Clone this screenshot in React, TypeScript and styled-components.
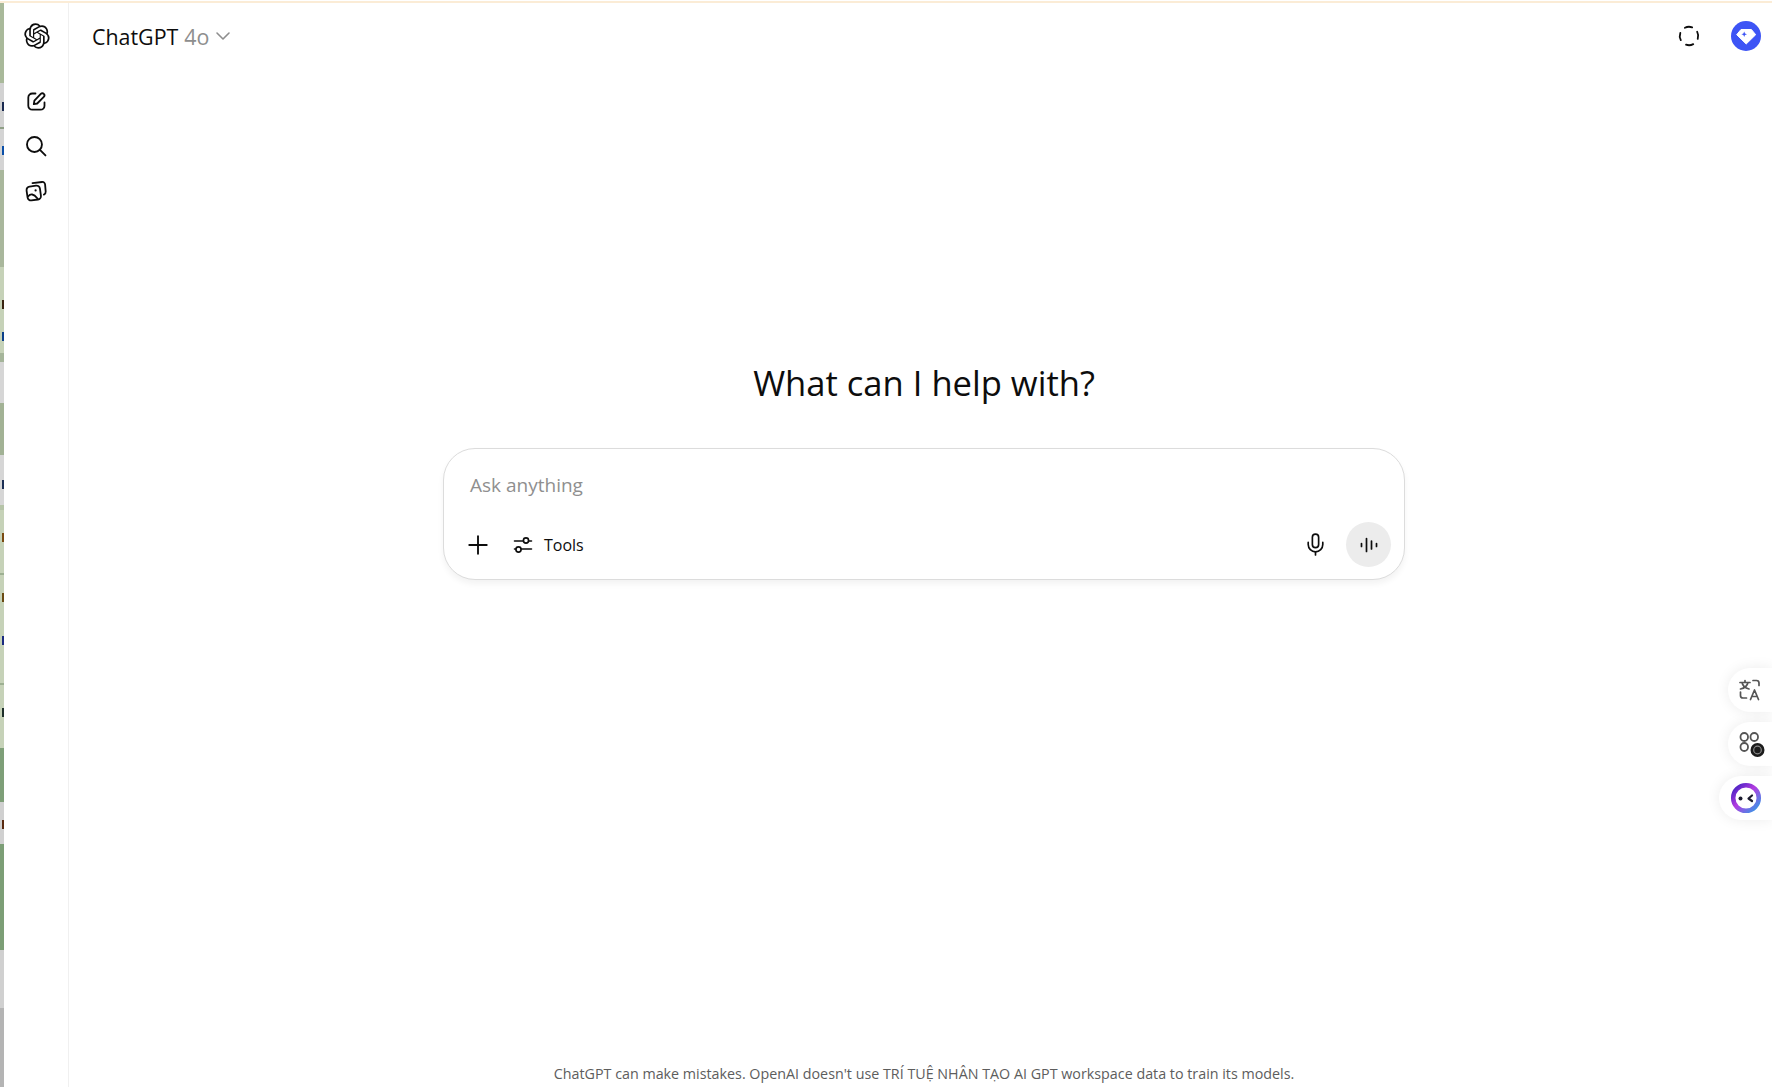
import React from 'react';
import styled, { createGlobalStyle } from 'styled-components';
import { ChevronDown, Mic, Plus } from 'lucide-react';

const GlobalStyle = createGlobalStyle`
  html, body {
    margin: 0;
    height: 100%;
    background: #fff;
    overflow: hidden;
  }
  #root {
    height: 100%;
  }
`;

const Page = styled.div`
  display: flex;
  flex-direction: column;
  width: 1772px;
  height: 1087px;
  font-family: 'Open Sans', 'Noto Sans', sans-serif;
  color: #0d0d0d;
  overflow: hidden;
`;

const TopEdge = styled.div`
  flex: 0 0 3px;
  background: linear-gradient(#fff 0, #fff 1px, #fbecd6 1px, #fbecd6 3px);
`;

const Body = styled.div`
  flex: 1;
  display: flex;
  min-height: 0;
`;

const Wallpaper = styled.div`
  flex: 0 0 4px;
  display: flex;
  flex-direction: column;
  position: relative;
  overflow: hidden;
`;

const Stripe = styled.div<{ $h: number; $c: string }>`
  flex: 0 0 ${({ $h }) => $h}px;
  background: ${({ $c }) => $c};
`;

const StripeMark = styled.span<{ $y: number; $c: string }>`
  position: absolute;
  right: 0;
  top: ${({ $y }) => $y - 3}px;
  width: 2px;
  height: 9px;
  background: ${({ $c }) => $c};
`;

const Rail = styled.aside`
  flex: 0 0 64px;
  display: flex;
  flex-direction: column;
  align-items: center;
  border-right: 1px solid #f0f0f0;
`;

const RailLogo = styled.div`
  display: flex;
  margin: 20px 0 34px 2px;
`;

const RailIcon = styled.button`
  display: flex;
  align-items: center;
  justify-content: center;
  width: 36px;
  height: 36px;
  margin-bottom: 9px;
  padding: 0;
  border: 0;
  background: none;
  color: #0d0d0d;
`;

const Main = styled.main`
  flex: 1;
  display: flex;
  flex-direction: column;
  position: relative;
  min-width: 0;
`;

const Header = styled.header`
  flex: 0 0 66px;
  display: flex;
  align-items: center;
  padding: 0 11px 0 23px;
`;

const ModelName = styled.div`
  display: flex;
  align-items: center;
  font-size: 21.4px;
  color: #0d0d0d;
`;

const ModelVersion = styled.span`
  margin-left: 6px;
  color: #8e8e8e;
`;

const ModelChevron = styled(ChevronDown)`
  margin-left: 2px;
  color: #8e8e8e;
`;

const HeaderActions = styled.div`
  margin-left: auto;
  display: flex;
  align-items: center;
  gap: 31px;
`;

const Center = styled.div`
  flex: 1;
  display: flex;
  flex-direction: column;
  align-items: center;
  padding: 291px 0 0 7px;
`;

const Heading = styled.h1`
  margin: 0 0 42px;
  font-size: 34.6px;
  line-height: 46px;
  font-weight: 400;
  color: #0d0d0d;
`;

const Composer = styled.div`
  box-sizing: border-box;
  width: 962px;
  height: 132px;
  padding: 22px 13px 12px 12px;
  display: flex;
  flex-direction: column;
  justify-content: space-between;
  border: 1px solid #dcdcdc;
  border-radius: 32px;
  background: #fff;
  box-shadow: 0 4px 6px rgba(0, 0, 0, 0.05);
`;

const Placeholder = styled.div`
  padding-left: 14px;
  font-size: 19px;
  line-height: 28px;
  color: #8f8f8f;
`;

const ComposerRow = styled.div`
  display: flex;
  align-items: center;
  padding-left: 4px;
`;

const PlainButton = styled.button`
  display: flex;
  align-items: center;
  justify-content: center;
  width: 36px;
  height: 36px;
  padding: 0;
  border: 0;
  background: none;
  color: #0d0d0d;
`;

const ToolsButton = styled.button`
  display: flex;
  align-items: center;
  gap: 11px;
  margin-left: 17px;
  padding: 0;
  border: 0;
  background: none;
  font: inherit;
  font-size: 16px;
  color: #0d0d0d;
`;

const RowEnd = styled.div`
  margin-left: auto;
  display: flex;
  align-items: center;
  gap: 13px;
`;

const VoiceButton = styled.button`
  display: flex;
  align-items: center;
  justify-content: center;
  width: 45px;
  height: 45px;
  padding: 0;
  border: 0;
  border-radius: 50%;
  background: #ececec;
  color: #0d0d0d;
`;

const Footer = styled.footer`
  flex: 0 0 auto;
  padding: 0 0 3px 7px;
  text-align: center;
  font-size: 14.3px;
  line-height: 20px;
  color: #5d5d5d;
`;

const FloatDock = styled.div`
  position: absolute;
  right: 0;
  top: 665px;
  display: flex;
  flex-direction: column;
  align-items: flex-end;
  gap: 10px;
`;

const FloatButton = styled.div<{ $wide?: boolean }>`
  display: flex;
  align-items: center;
  box-sizing: border-box;
  width: ${({ $wide }) => ($wide ? 53 : 44)}px;
  height: 44px;
  padding-left: ${({ $wide }) => ($wide ? 11 : 9)}px;
  border-radius: 22px 0 0 22px;
  background: #fff;
  box-shadow: 0 0 14px rgba(0, 0, 0, 0.08);
`;

const wallpaper: [number, string][] = [
  [80, '#a9b99a'],
  [44, '#d2d2d2'],
  [2, '#8f9f86'],
  [41, '#d4d4d4'],
  [97, '#a9b79c'],
  [86, '#c6d2b8'],
  [9, '#a5b59a'],
  [41, '#d6d6d6'],
  [52, '#a2b295'],
  [50, '#d6d6d6'],
  [5, '#b6c4a8'],
  [63, '#c6d2b8'],
  [2, '#9db092'],
  [108, '#c6d2b8'],
  [2, '#9db092'],
  [63, '#c6d2b8'],
  [54, '#7e9f78'],
  [42, '#d0d0d0'],
  [106, '#7c9e76'],
  [58, '#d0d0d0'],
  [79, '#b4b4b4'],
];

// bits of window text that stick out from behind the browser
const wallpaperMarks: [number, string][] = [
  [102, '#1a2a50'],
  [146, '#0b4fa8'],
  [300, '#3a2410'],
  [332, '#0b3f8a'],
  [480, '#1c2f55'],
  [533, '#7a4a10'],
  [593, '#6a4a12'],
  [636, '#1a2a80'],
  [708, '#1d2f2a'],
  [820, '#5a2a10'],
];

const OpenAiMark = () => (
  <svg width="26" height="26" viewBox="0 0 41 41" fill="#0d0d0d">
    <path d="M37.532 16.87a9.963 9.963 0 0 0-.856-8.184 10.078 10.078 0 0 0-10.855-4.835A9.964 9.964 0 0 0 18.306.5a10.079 10.079 0 0 0-9.614 6.977 9.967 9.967 0 0 0-6.664 4.834 10.08 10.08 0 0 0 1.24 11.817 9.965 9.965 0 0 0 .856 8.185 10.079 10.079 0 0 0 10.855 4.835 9.965 9.965 0 0 0 7.516 3.35 10.078 10.078 0 0 0 9.617-6.981 9.967 9.967 0 0 0 6.663-4.834 10.079 10.079 0 0 0-1.243-11.813ZM22.498 37.886a7.474 7.474 0 0 1-4.799-1.735c.061-.033.168-.091.237-.134l7.964-4.6a1.294 1.294 0 0 0 .655-1.134V19.054l3.366 1.944a.12.12 0 0 1 .066.092v9.299a7.505 7.505 0 0 1-7.49 7.496ZM6.392 31.006a7.471 7.471 0 0 1-.894-5.023c.06.036.162.099.237.141l7.964 4.6a1.297 1.297 0 0 0 1.308 0l9.724-5.614v3.888a.12.12 0 0 1-.048.103l-8.051 4.649a7.504 7.504 0 0 1-10.24-2.744ZM4.297 13.62A7.469 7.469 0 0 1 8.2 10.333c0 .068-.004.19-.004.274v9.201a1.294 1.294 0 0 0 .654 1.132l9.723 5.614-3.366 1.944a.12.12 0 0 1-.114.01L7.04 23.856a7.504 7.504 0 0 1-2.743-10.237Zm27.658 6.437-9.724-5.615 3.367-1.943a.121.121 0 0 1 .113-.01l8.052 4.648a7.498 7.498 0 0 1-1.158 13.528v-9.476a1.293 1.293 0 0 0-.65-1.132Zm3.35-5.043c-.059-.037-.162-.099-.236-.141l-7.965-4.6a1.298 1.298 0 0 0-1.308 0l-9.723 5.614v-3.888a.12.12 0 0 1 .048-.103l8.05-4.645a7.497 7.497 0 0 1 11.135 7.763Zm-21.063 6.929-3.367-1.944a.12.12 0 0 1-.065-.092v-9.299a7.497 7.497 0 0 1 12.293-5.756 6.94 6.94 0 0 0-.236.134l-7.965 4.6a1.294 1.294 0 0 0-.654 1.132l-.006 11.225Zm1.829-3.943 4.33-2.501 4.332 2.5v5l-4.331 2.5-4.331-2.5V18Z" />
  </svg>
);

const PenIcon = () => (
  <svg width="21" height="21" viewBox="0 0 21 21" fill="none" stroke="#0d0d0d" strokeWidth="1.8" strokeLinecap="round" strokeLinejoin="round">
    <path d="M9.5 2.5H6.3a4 4 0 0 0-4 4v8.2a4 4 0 0 0 4 4h8.2a4 4 0 0 0 4-4v-3.2" />
    <path d="M7.8 13.2 8.4 9.7l6.4-6.8c.9-.9 2.2-.9 3 0 .8.8.8 2.100 0 2.900l-6.600 6.700Z" />
  </svg>
);

const SearchIcon = () => (
  <svg width="22" height="22" viewBox="0 0 20 20" fill="none" stroke="#0d0d0d" strokeWidth="1.7" strokeLinecap="round">
    <circle cx="8.6" cy="8.6" r="6.800" />
    <path d="M13.6 13.6 18.6 18.6" />
  </svg>
);

const LibraryIcon = () => (
  <svg width="22" height="22" viewBox="0 0 22 22" fill="none" stroke="#0d0d0d" strokeWidth="1.8" strokeLinejoin="round" strokeLinecap="round">
    <rect x="2" y="6" width="13.5" height="14" rx="3.5" transform="rotate(-8 9 13)" />
    <path d="M7.5 3.2 17 2c1.8-.2 3 .9 3.100 2.600l.6 7c.1 1.400-.5 2.400-1.800 3" />
    <circle cx="10.6" cy="10.4" r="1.1" fill="#0d0d0d" stroke="none" />
    <path d="M3 16.5c2.500-3 5.500-3 9.500 2" />
  </svg>
);

const DashedCircle = () => (
  <svg width="22" height="22" viewBox="0 0 22 22" fill="none" stroke="#0d0d0d" strokeWidth="1.8" strokeLinecap="round">
    <circle cx="11" cy="11" r="9.2" strokeDasharray="7.4 7.05" transform="rotate(-28 11 11)" />
  </svg>
);

const GemBadge = () => (
  <svg width="30" height="30" viewBox="0 0 30 30">
    <circle cx="15" cy="15" r="15" fill="#3d54f5" />
    <path d="M10 8.5h10.400l4.300 5.200L15.200 23 5.700 13.700Z" fill="#fff" stroke="#fff" strokeWidth="1" strokeLinejoin="round" />
    <path d="M13.200 10.500l.8 2 2 .8-2 .8-.8 2-.8-2-2-.8 2-.8Z" fill="#3d54f5" />
  </svg>
);

const ToolsIcon = () => (
  <svg width="20" height="20" viewBox="0 0 20 20" fill="none" stroke="#0d0d0d" strokeWidth="1.6" strokeLinecap="round">
    <path d="M1.500 6h9M15.500 6h3M1.500 14h1.500M8 14h10.500" />
    <circle cx="13" cy="5.5" r="2.6" />
    <circle cx="5.5" cy="14.500" r="2.6" />
  </svg>
);

const VoiceIcon = () => (
  <svg width="20" height="20" viewBox="0 0 20 20" fill="none" stroke="#0d0d0d" strokeWidth="1.7" strokeLinecap="round">
    <path d="M2.500 8.500v3M7.500 3.500v13M12.500 6v8M17.500 8.500v3" />
  </svg>
);

const TranslateIcon = () => (
  <svg width="26" height="26" viewBox="0 0 26 26" fill="none" stroke="#555" strokeWidth="1.7" strokeLinecap="round" strokeLinejoin="round">
    <path d="M3 5.500h10M8 3.500v2M5 5.500c.6 2.800 3 5.500 7 6.500M11 5.500c-.6 2.800-3 5.500-7.500 6.500" />
    <path d="M16 3.500h3.500c1.500 0 2.500 1 2.500 2.500v2.500" />
    <path d="M3.500 15v3.500c0 1.500 1 2.500 2.500 2.500h3.500" />
    <path d="M13.500 22.500l4-9.500 4 9.500M15 19.500h5" />
  </svg>
);

const AppsIcon = () => (
  <svg width="28" height="28" viewBox="0 0 28 28" fill="none" stroke="#555" strokeWidth="1.8">
    <rect x="3.5" y="3" width="7.5" height="8" rx="3.7" />
    <rect x="13.5" y="3" width="7.5" height="8" rx="3.7" />
    <rect x="3.5" y="13" width="7.5" height="8" rx="3.7" />
    <circle cx="20.5" cy="20" r="7" fill="#1c1c1c" stroke="none" />
    <circle cx="20.5" cy="20" r="3.8" stroke="#8a8a8a" strokeWidth="1.2" />
  </svg>
);

const MascotIcon = () => (
  <svg width="32" height="32" viewBox="0 0 32 32" fill="none">
    <defs>
      <linearGradient id="mascot-ring" x1="0" y1="0" x2="1" y2="1">
        <stop offset="0" stopColor="#3a1fc0" />
        <stop offset="0.45" stopColor="#b33be0" />
        <stop offset="1" stopColor="#2f9fe8" />
      </linearGradient>
    </defs>
    <circle cx="16" cy="16" r="12.8" stroke="url(#mascot-ring)" strokeWidth="4.5" />
    <circle cx="10.5" cy="16.5" r="2" fill="#1a1a2e" />
    <path d="M22 13.500 18.500 16.500 22 19" stroke="#1a1a2e" strokeWidth="2.2" strokeLinecap="round" strokeLinejoin="round" />
  </svg>
);

export default function App() {
  return (
    <Page>
      <GlobalStyle />
      <TopEdge />
      <Body>
        <Wallpaper>
          {wallpaper.map(([h, c], i) => (
            <Stripe key={i} $h={h} $c={c} />
          ))}
          {wallpaperMarks.map(([y, c]) => (
            <StripeMark key={y} $y={y} $c={c} />
          ))}
        </Wallpaper>
        <Rail>
          <RailLogo>
            <OpenAiMark />
          </RailLogo>
          <RailIcon>
            <PenIcon />
          </RailIcon>
          <RailIcon>
            <SearchIcon />
          </RailIcon>
          <RailIcon>
            <LibraryIcon />
          </RailIcon>
        </Rail>
        <Main>
          <Header>
            <ModelName>
              ChatGPT<ModelVersion>4o</ModelVersion>
              <ModelChevron size={24} strokeWidth={1.6} />
            </ModelName>
            <HeaderActions>
              <DashedCircle />
              <GemBadge />
            </HeaderActions>
          </Header>
          <Center>
            <Heading>What can I help with?</Heading>
            <Composer>
              <Placeholder>Ask anything</Placeholder>
              <ComposerRow>
                <PlainButton>
                  <Plus size={30} strokeWidth={1.5} />
                </PlainButton>
                <ToolsButton>
                  <ToolsIcon />
                  Tools
                </ToolsButton>
                <RowEnd>
                  <PlainButton>
                    <Mic size={25} strokeWidth={1.6} />
                  </PlainButton>
                  <VoiceButton>
                    <VoiceIcon />
                  </VoiceButton>
                </RowEnd>
              </ComposerRow>
            </Composer>
          </Center>
          <Footer>
            ChatGPT can make mistakes. OpenAI doesn't use TRÍ TUỆ NHÂN TẠO AI GPT workspace data to train its models.
          </Footer>
          <FloatDock>
            <FloatButton>
              <TranslateIcon />
            </FloatButton>
            <FloatButton>
              <AppsIcon />
            </FloatButton>
            <FloatButton $wide>
              <MascotIcon />
            </FloatButton>
          </FloatDock>
        </Main>
      </Body>
    </Page>
  );
}
